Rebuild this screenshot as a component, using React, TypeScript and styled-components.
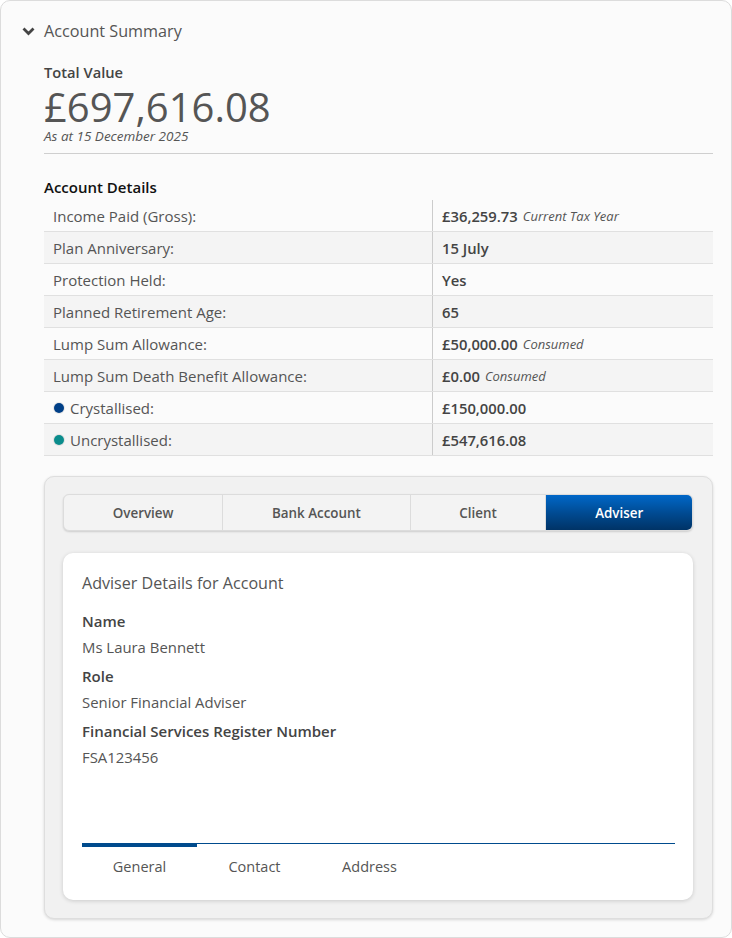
import React from "react";
import styled, { createGlobalStyle } from "styled-components";

const Global = createGlobalStyle`
  html, body { margin: 0; padding: 0; background: #ffffff; }
  body { font-family: "Open Sans", "Noto Sans", sans-serif; color: #555; }
  * { box-sizing: border-box; }
`;

const Panel = styled.section`
  width: 732px;
  min-height: 938px;
  background: #fbfbfb;
  border: 1px solid #dcdcdc;
  border-radius: 10px;
  padding: 18px 18px 18px 0;
  display: flex;
  flex-direction: column;
`;

const Header = styled.div`
  display: flex;
  align-items: center;
  gap: 9px;
  padding-left: 21px;
  height: 24px;
`;

const HeaderTitle = styled.h2`
  margin: 0;
  font-size: 16.2px;
  line-height: 24px;
  font-weight: 400;
  color: #555;
`;

const Body = styled.div`
  padding-left: 43px;
  display: flex;
  flex-direction: column;
`;

const Label = styled.div`
  font-size: 14.7px;
  line-height: 20px;
  font-weight: 600;
  color: #444;
  margin-top: 19px;
`;

const BigValue = styled.div`
  font-size: 40px;
  line-height: 42px;
  color: #555;
  margin-top: 4px;
`;

const AsAt = styled.div`
  font-size: 13.5px;
  line-height: 16px;
  font-style: italic;
  color: #555;
`;

const Divider = styled.hr`
  margin: 9px 0 0;
  border: 0;
  border-top: 1px solid #cfcfcf;
`;

const SectionTitle = styled.div`
  font-size: 15px;
  line-height: 20px;
  font-weight: 600;
  color: #111;
  margin-top: 23px;
`;

const Table = styled.div`
  margin-top: 3px;
  display: flex;
  flex-direction: column;
`;

const Row = styled.div<{ $alt: boolean }>`
  display: grid;
  grid-template-columns: 389px 1fr;
  height: 32px;
  background: ${(p) => (p.$alt ? "#f4f4f4" : "#fbfbfb")};
  border-bottom: 1px solid #e0e0e0;
`;

const KeyCell = styled.div`
  display: flex;
  align-items: center;
  gap: 6px;
  padding-left: 9px;
  font-size: 15px;
  color: #555;
  border-right: 1px solid #cccccc;
`;

const ValCell = styled.div`
  display: flex;
  align-items: center;
  gap: 5px;
  padding-left: 9px;
  font-size: 14.8px;
  font-weight: 600;
  color: #444;
`;

const Note = styled.span`
  font-size: 13px;
  font-weight: 400;
  font-style: italic;
  color: #555;
`;

const Dot = styled.span<{ $color: string }>`
  width: 10px;
  height: 10px;
  border-radius: 50%;
  background: ${(p) => p.$color};
  box-shadow: 0 0 0 1px rgba(0, 0, 0, 0.08);
  margin-left: 1px;
`;

const TabsPanel = styled.div`
  margin-top: 20px;
  background: #f1f1f1;
  border: 1px solid #dedede;
  border-radius: 10px;
  box-shadow: 0 1px 3px rgba(0, 0, 0, 0.15);
  padding: 17px 19px 18px 18px;
  display: flex;
  flex-direction: column;
  gap: 22px;
`;

const TabBar = styled.div`
  display: flex;
  height: 37px;
  background: #f3f3f3;
  border: 1px solid #dcdcdc;
  border-radius: 6px;
  box-shadow: 0 1px 2px rgba(0, 0, 0, 0.15);
  overflow: hidden;
`;

const Tab = styled.div<{ $active: boolean }>`
  flex: 1 1 auto;
  display: flex;
  align-items: center;
  justify-content: center;
  font-size: 13.4px;
  font-weight: 600;
  color: ${(p) => (p.$active ? "#ffffff" : "#555")};
  background: ${(p) =>
    p.$active ? "linear-gradient(to bottom, #0067c8 0%, #00498f 55%, #003366 100%)" : "transparent"};
  & + & {
    border-left: 1px solid #dcdcdc;
  }
`;

const Card = styled.div`
  background: #ffffff;
  border-radius: 10px;
  box-shadow: 0 1px 4px rgba(0, 0, 0, 0.16);
  padding: 18px 18px 0 19px;
  height: 347px;
  display: flex;
  flex-direction: column;
`;

const CardTitle = styled.h3`
  margin: 0;
  font-size: 16.1px;
  line-height: 24px;
  font-weight: 400;
  color: #555;
`;

const Field = styled.div`
  display: flex;
  flex-direction: column;
  gap: 6px;
  margin-top: 9px;
  &:first-of-type {
    margin-top: 16px;
  }
`;

const FieldLabel = styled.div`
  font-size: 15px;
  line-height: 20px;
  font-weight: 600;
  color: #444;
`;

const FieldValue = styled.div`
  font-size: 14.9px;
  line-height: 20px;
  color: #555;
`;

const SubNav = styled.div`
  margin-top: auto;
  margin-bottom: 23px;
  display: flex;
  border-top: 1px solid #004b8d;
`;

const SubTab = styled.div<{ $active: boolean }>`
  width: 115px;
  margin-top: -1px;
  border-top: 4px solid ${(p) => (p.$active ? "#004b8d" : "transparent")};
  padding-top: 10px;
  text-align: center;
  font-size: 14.5px;
  line-height: 20px;
  color: #555;
`;

const Chevron = () => (
  <svg width="13" height="9" viewBox="0 0 13 9" aria-hidden="true">
    <polyline points="1.5,1.5 6.5,6.5 11.5,1.5" fill="none" stroke="#444" strokeWidth="2.8" />
  </svg>
);

type RowData = { key: string; val: string; note?: string; dot?: string };

const rows: RowData[] = [
  { key: "Income Paid (Gross):", val: "£36,259.73", note: "Current Tax Year" },
  { key: "Plan Anniversary:", val: "15 July" },
  { key: "Protection Held:", val: "Yes" },
  { key: "Planned Retirement Age:", val: "65" },
  { key: "Lump Sum Allowance:", val: "£50,000.00", note: "Consumed" },
  { key: "Lump Sum Death Benefit Allowance:", val: "£0.00", note: "Consumed" },
  { key: "Crystallised:", val: "£150,000.00", dot: "#003f87" },
  { key: "Uncrystallised:", val: "£547,616.08", dot: "#0a8c8c" },
];

const tabs = ["Overview", "Bank Account", "Client", "Adviser"];

const fields = [
  { label: "Name", value: "Ms Laura Bennett" },
  { label: "Role", value: "Senior Financial Adviser" },
  { label: "Financial Services Register Number", value: "FSA123456" },
];

export default function App() {
  return (
    <>
      <Global />
      <Panel>
        <Header>
          <Chevron />
          <HeaderTitle>Account Summary</HeaderTitle>
        </Header>
        <Body>
          <Label>Total Value</Label>
          <BigValue>£697,616.08</BigValue>
          <AsAt>As at 15 December 2025</AsAt>
          <Divider />
          <SectionTitle>Account Details</SectionTitle>
          <Table>
            {rows.map((r, i) => (
              <Row key={r.key} $alt={i % 2 === 1}>
                <KeyCell>
                  {r.dot && <Dot $color={r.dot} />}
                  {r.key}
                </KeyCell>
                <ValCell>
                  {r.val}
                  {r.note && <Note>{r.note}</Note>}
                </ValCell>
              </Row>
            ))}
          </Table>
          <TabsPanel>
            <TabBar>
              {tabs.map((t) => (
                <Tab key={t} $active={t === "Adviser"}>
                  {t}
                </Tab>
              ))}
            </TabBar>
            <Card>
              <CardTitle>Adviser Details for Account</CardTitle>
              {fields.map((f) => (
                <Field key={f.label}>
                  <FieldLabel>{f.label}</FieldLabel>
                  <FieldValue>{f.value}</FieldValue>
                </Field>
              ))}
              <SubNav>
                <SubTab $active>General</SubTab>
                <SubTab $active={false}>Contact</SubTab>
                <SubTab $active={false}>Address</SubTab>
              </SubNav>
            </Card>
          </TabsPanel>
        </Body>
      </Panel>
    </>
  );
}
